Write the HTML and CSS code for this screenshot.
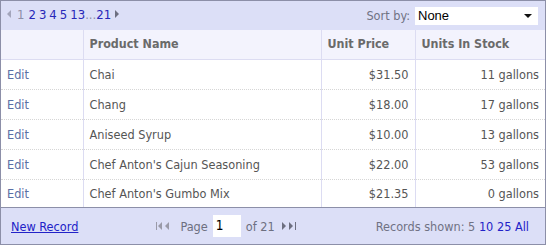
FILE: index.html
```html
<!DOCTYPE html>
<html>
<head>
<meta charset="utf-8">
<link rel="stylesheet" href="styles.css">
</head>
<body>
<div class="grid">
  <div class="topbar">
    <div class="pager-top">
      <span class="tri tri-left"></span>
      <span class="cur">1</span>
      <a>2</a><a>3</a><a>4</a><a>5</a><a>13</a><span class="dots">...</span><a>21</a>
      <span class="tri tri-right"></span>
    </div>
    <div class="sort">
      <span class="sort-label">Sort by:</span>
      <div class="select"><span>None</span><span class="caret"></span></div>
    </div>
  </div>
  <table class="data">
    <colgroup><col class="c1"><col class="c2"><col class="c3"><col class="c4"></colgroup>
    <thead>
      <tr><th></th><th>Product Name</th><th>Unit Price</th><th>Units In Stock</th></tr>
    </thead>
    <tbody>
      <tr><td class="edit">Edit</td><td>Chai</td><td class="num">$31.50</td><td class="num">11 gallons</td></tr>
      <tr><td class="edit">Edit</td><td>Chang</td><td class="num">$18.00</td><td class="num">17 gallons</td></tr>
      <tr><td class="edit">Edit</td><td>Aniseed Syrup</td><td class="num">$10.00</td><td class="num">13 gallons</td></tr>
      <tr><td class="edit">Edit</td><td>Chef Anton's Cajun Seasoning</td><td class="num">$22.00</td><td class="num">53 gallons</td></tr>
      <tr class="last"><td class="edit">Edit</td><td>Chef Anton's Gumbo Mix</td><td class="num">$21.35</td><td class="num">0 gallons</td></tr>
    </tbody>
  </table>
  <div class="footer">
    <a class="newrec">New Record</a>
    <div class="pager">
      <svg class="nav" width="20" height="10" viewBox="0 0 20 10"><rect x="1" y="1" width="1" height="8" fill="#9a9aa8"/><path d="M7 1 L3 5 L7 9 Z" fill="#9a9aa8"/><path d="M14 1 L10 5 L14 9 Z" fill="#9a9aa8"/></svg>
      <span class="plabel">Page</span>
      <div class="pinput">1</div>
      <span class="plabel">of 21</span>
      <svg class="nav" width="20" height="10" viewBox="0 0 20 10"><path d="M2 1 L6 5 L2 9 Z" fill="#6d6f80"/><path d="M9 1 L13 5 L9 9 Z" fill="#6d6f80"/><rect x="15" y="1" width="1" height="8" fill="#6d6f80"/></svg>
    </div>
    <div class="records">Records shown: 5 <a>10</a> <a>25</a> <a>All</a></div>
  </div>
</div>
</body>
</html>
```
FILE: styles.css
```css
html, body { margin: 0; padding: 0; background: #fff; }
body { font-family: Tahoma, "DejaVu Sans Condensed", "DejaVu Sans", sans-serif; font-size: 12.6px; color: #555; }
.grid { width: 544px; height: 243px; border: 1px solid #8c8fa8; display: flex; flex-direction: column; background: #fff; }
.topbar { height: 29px; flex: none; background: #dcdff7; display: flex; align-items: center; justify-content: space-between; padding: 0 7px 0 4px; }
.pager-top { display: flex; align-items: center; font-size: 13px; margin-top: -3px; }
.pager-top a { color: #2727b8; margin-right: 3px; }
.pager-top .cur { color: #8d8fa8; margin-right: 4px; margin-left: 6px; }
.pager-top .dots { color: #8d8fa8; margin-left: -3px; }
.tri { width: 0; height: 0; border-top: 4px solid transparent; border-bottom: 4px solid transparent; }
.tri-left { border-right: 4px solid #a3a5bb; margin-left: 2px; }
.tri-right { border-left: 4px solid #6d6f80; margin-left: 1px; }
.sort { display: flex; align-items: center; }
.sort-label { color: #707284; font-size: 12.6px; margin-right: 5px; }
.select { width: 123px; height: 18px; background: #fff; display: flex; align-items: center; justify-content: space-between; font-family: "Liberation Sans", Arial, sans-serif; font-size: 13px; color: #000; padding: 0 6px 0 3px; box-sizing: border-box; }
.caret { width: 0; height: 0; border-left: 4px solid transparent; border-right: 4px solid transparent; border-top: 4px solid #111; }
.data { border-collapse: collapse; width: 544px; table-layout: fixed; flex: none; }
.c1 { width: 82px; } .c2 { width: 238px; } .c3 { width: 94px; } .c4 { width: 130px; }
.data th { height: 29px; background: #f3f3fd; text-align: left; font-weight: bold; font-size: 12.4px; color: #6a6a6a; padding: 0 6px 2px; border-left: 1px solid #dcdcf2; border-bottom: 1px solid #dcdcf2; box-sizing: border-box; }
.data th:first-child, .data td:first-child { border-left: none; }
.data td { height: 30px; padding: 0 6px; border-left: 1px solid #dcdcf2; border-bottom: 1px dotted #d6d6d6; box-sizing: border-box; color: #555; white-space: nowrap; }
.data tr.last td { border-bottom: none; height: 28px; }
.data td.num { text-align: right; }
.data td.edit { color: #5a6fa5; }
.footer { flex: 1; background: #dcdff7; border-top: 1px solid #8c8fa8; display: flex; align-items: center; padding: 0 16px 0 10px; }
.newrec { color: #2222c8; text-decoration: underline; }
.pager { display: flex; align-items: center; margin-left: 77px; }
.nav { display: block; }
.plabel { color: #6d6f80; margin: 0 5px; }
.pinput { width: 28px; height: 22px; background: #fff; color: #000; font-size: 13.5px; box-sizing: border-box; padding: 2px 0 0 3px; }
.records { margin-left: auto; color: #707284; }
.records a { color: #2222c8; }
```
